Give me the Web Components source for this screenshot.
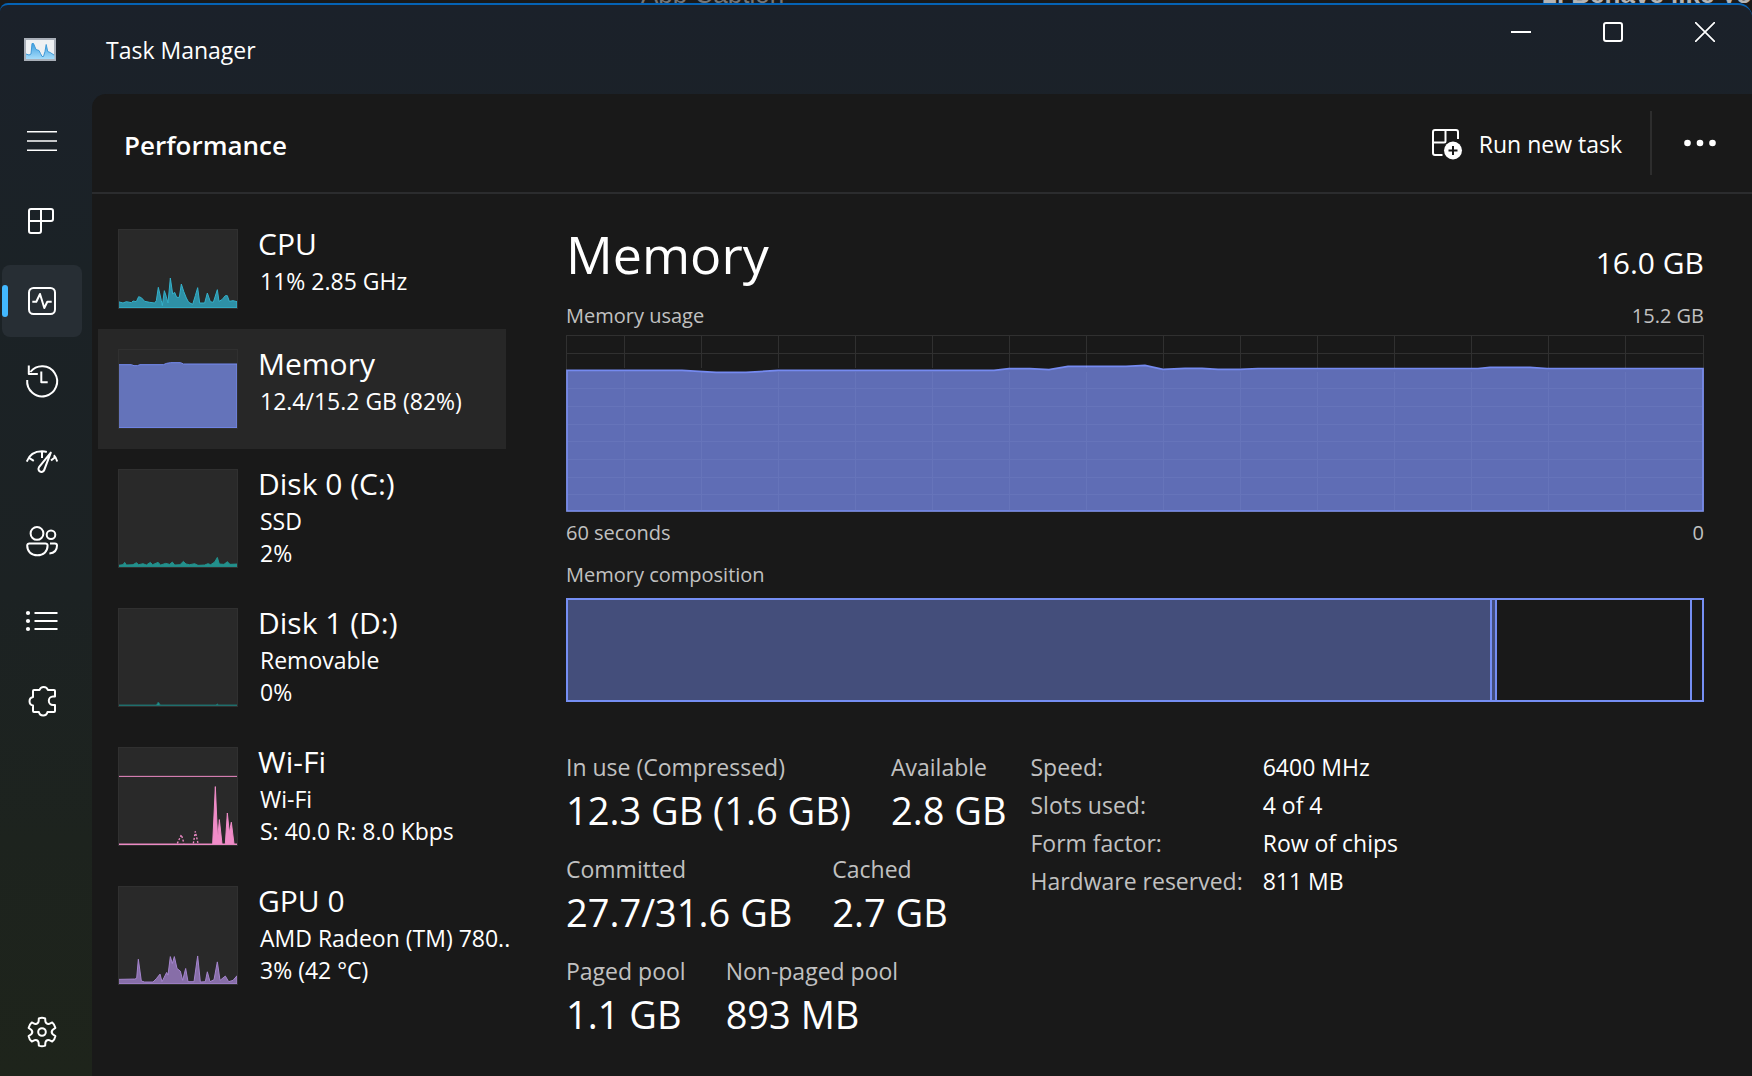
<!DOCTYPE html>
<html lang="en">
<head>
<meta charset="utf-8">
<title>Task Manager</title>
<style>
  html, body { height: 100%; margin: 0; background: #191919; }
  body { font-family: "Open Sans", "Noto Sans", sans-serif; color: #fff; overflow: hidden; }
</style>
</head>
<body>
<tm-app></tm-app>

<script>
const define = (name, html, setup) => {
  const template = document.createElement('template');
  template.innerHTML = html;
  customElements.define(name, class extends HTMLElement {
    connectedCallback() {
      if (this.shadowRoot) return;
      const content = template.content.cloneNode(true);
      if (setup) setup(this, content);
      this.attachShadow({ mode: 'open' }).append(content);
    }
  });
};

const gearPath = () => {
  const at = (deg, r) => {
    const a = deg * Math.PI / 180;
    return (16 + r * Math.sin(a)).toFixed(2) + ' ' + (16 - r * Math.cos(a)).toFixed(2);
  };
  let d = '';
  for (let k = 0; k < 6; k++) {
    const a = k * 60;
    d += (k ? 'L' : 'M') + at(a - 13, 14) + 'Q' + at(a, 14.8) + ' ' + at(a + 13, 14)
       + 'L' + at(a + 18, 11) + 'Q' + at(a + 30, 8.6) + ' ' + at(a + 42, 11);
  }
  return '<path d="' + d + 'Z"/><circle cx="16" cy="16" r="3.8"/>';
};

const icons = {
  menu: '<path d="M1 6.7h30M1 16h30M1 25.3h30" stroke-width="1.6"/>',
  processes: '<path d="M3 6a2 2 0 0 1 2-2h20a2 2 0 0 1 2 2v8a2 2 0 0 1-2 2H15v10a2 2 0 0 1-2 2H5a2 2 0 0 1-2-2zM15 4v12M3 16h12"/>',
  performance: '<rect x="3" y="3" width="26" height="26" rx="4.5"/><path d="M6.3 16.7h4L14 9l4.3 14 3-6.3h4.4"/>',
  history: '<path d="M1.2 15A15 15 0 1 0 4.4 7M2.8.5v8.6h9M15.3 6.5v10.8h6.4"/>',
  startup: '<path d="M.8 16.6C3.4 9.4 9.6 6.3 16 6.3c1.8 0 3.2.2 4.8.7M27.8 10.3c1.6 1.6 2.7 3.6 3.4 6.3M2.6 12.6l5.2 3.2M16 6.5V13M30 11.4l-5 4.2"/><path d="M24.8 7.6 13 22.2a3 3 0 0 0 .8 4.2 3 3 0 0 0 4.4-1.4z"/>',
  users: '<circle cx="11" cy="8.4" r="6.4"/><circle cx="25" cy="9.8" r="4.3"/><path d="M1.2 20.6a2.2 2.2 0 0 1 2.2-2.2h16a2.2 2.2 0 0 1 2.2 2.2c0 6-4.2 9.6-10.2 9.6S1.2 26.6 1.2 20.6zM24 18.4h4.8a2.2 2.2 0 0 1 2.2 2.2c0 5-2.6 7.6-7.6 8"/>',
  details: '<path d="M8.5 8h23M8.5 16h23M8.5 24h23"/><g fill="#fff" stroke="none"><circle cx="2" cy="8" r="2.1"/><circle cx="2" cy="16" r="2.1"/><circle cx="2" cy="24" r="2.1"/></g>',
  services: '<path d="M8 5h5.5a4.4 4.4 0 0 1 8.4 0H28a1 1 0 0 1 1 1v5.500h-2a4.200 4.200 0 0 0 0 8.400h2V26a1 1 0 0 1-1 1h-6.500a4.400 4.400 0 0 1-8.600 0H8a1 1 0 0 1-1-1v-5.500a4.400 4.400 0 0 1 0-8.600V6a1 1 0 0 1 1-1z"/>',
  settings: gearPath()
};

define('tm-icon', `
  <style>
    :host { display: block; width: 32px; height: 32px; }
    svg { display: block; overflow: visible; fill: none; stroke: #fff; stroke-width: 2; stroke-linejoin: round; stroke-linecap: butt; }
  </style>
  <svg width="32" height="32" viewBox="0 0 32 32" aria-hidden="true"></svg>`,
  (host, root) => { root.querySelector('svg').innerHTML = icons[host.getAttribute('name')]; });

define('tm-nav-item', `
  <style>
    :host { display: block; }
    button { width: 80px; height: 72px; padding: 0; border: 0; border-radius: 8px; background: none; display: grid; place-items: center; position: relative; }
    :host([current]) button { background: #272e34; }
    :host([current]) button::before { content: ""; position: absolute; left: 0; top: 20px; width: 6px; height: 32px; border-radius: 3px; background: #42b8ff; }
  </style>
  <button type="button"><tm-icon></tm-icon></button>`,
  (host, root) => {
    root.querySelector('tm-icon').setAttribute('name', host.getAttribute('icon'));
    root.querySelector('button').setAttribute('aria-label', host.getAttribute('label'));
  });

define('tm-nav', `
  <style>
    :host { display: block; }
    nav { height: 100%; box-sizing: border-box; padding: 11px 0 8px 2px; display: flex; flex-direction: column; gap: 8px; }
    .end { margin-top: auto; }
  </style>
  <nav aria-label="Pages">
    <tm-nav-item icon="menu" label="Open navigation"></tm-nav-item>
    <tm-nav-item icon="processes" label="Processes"></tm-nav-item>
    <tm-nav-item icon="performance" label="Performance" current></tm-nav-item>
    <tm-nav-item icon="history" label="App history"></tm-nav-item>
    <tm-nav-item icon="startup" label="Startup apps"></tm-nav-item>
    <tm-nav-item icon="users" label="Users"></tm-nav-item>
    <tm-nav-item icon="details" label="Details"></tm-nav-item>
    <tm-nav-item icon="services" label="Services"></tm-nav-item>
    <tm-nav-item class="end" icon="settings" label="Settings"></tm-nav-item>
  </nav>`);

define('tm-titlebar', `
  <style>
    :host { display: flex; align-items: center; height: 89px; padding: 0 1px 0 24px; }
    .name { margin-left: 50px; font-size: 23px; line-height: 32px; flex: 1; }
    .controls { align-self: flex-start; display: flex; }
    button { width: 92px; height: 54px; padding: 0; border: 0; background: none; display: grid; place-items: center; }
    svg { display: block; fill: none; stroke: #fff; stroke-width: 2; }
  </style>
  <svg width="32" height="23" viewBox="0 0 32 23" aria-hidden="true">
    <defs><linearGradient id="g" x1="0" y1="0" x2="0" y2="1"><stop offset="0" stop-color="#3f9fe0"/><stop offset="1" stop-color="#a5dcfa"/></linearGradient></defs>
    <rect x="1" y="1" width="30" height="21" fill="#eef0f2" stroke="#a9afb8"/>
    <path d="M2 21v-5l3 1 2-1 1-10 1.5-.5 2.5 6 3 1 1.5 3 1.5 3h1.5l1.5-5 1.2-7 1.5 7 2.5 1 4.3 3V21z" fill="url(#g)" stroke="none"/>
    <path d="M2 16l3 1 2-1 1-10.5h1.5l2.5 6 3 1 1.5 3 1.5 3h1.5l1.5-5 1.2-7 1.5 7 2.5 1 3.8 2.500" stroke="#3f9ad8" stroke-width="1"/>
  </svg>
  <span class="name">Task Manager</span>
  <div class="controls">
    <button type="button" aria-label="Minimize"><svg width="20" height="20"><path d="M0 10h20"/></svg></button>
    <button type="button" aria-label="Maximize"><svg width="20" height="20"><rect x="1" y="1" width="18" height="18" rx="2"/></svg></button>
    <button type="button" aria-label="Close"><svg width="20" height="20"><path d="M0 0l20 20M20 0L0 20" stroke-width="1.7"/></svg></button>
  </div>`);

define('tm-header', `
  <style>
    :host { display: flex; align-items: center; height: 98px; border-bottom: 2px solid #2b2c2e; padding-left: 32px; }
    h1 { margin: 0; padding-top: 4px; flex: 1; font-size: 26px; line-height: 36px; font-weight: 600; }
    button { border: 0; background: none; padding: 0; color: inherit; font: inherit; }
    .run { display: flex; align-items: center; gap: 16px; padding: 18px 28px 16px 16px; font-size: 23px; line-height: 32px; }
    .sep { width: 2px; height: 64px; background: #2d2d2d; }
    .more { width: 100px; height: 64px; padding-right: 4px; display: grid; place-items: center; }
    svg { display: block; }
  </style>
  <h1>Performance</h1>
  <button type="button" class="run">
    <svg width="31" height="31" viewBox="0 0 31 31" fill="none" stroke="#fff" stroke-width="2" aria-hidden="true">
      <path d="M10.5 26H3a2 2 0 0 1-2-2V3a2 2 0 0 1 2-2h21a2 2 0 0 1 2 2v7M13.5 1v11a1.5 1.5 0 0 1-1.5 1.5H1"/>
      <circle cx="21" cy="21.5" r="9" fill="#fff" stroke="none"/>
      <path d="M21 17v9M16.5 21.5h9" stroke="#191919"/>
    </svg>
    <span>Run new task</span>
  </button>
  <div class="sep"></div>
  <button type="button" class="more" aria-label="More options">
    <svg width="32" height="8" fill="#fff"><circle cx="3.5" cy="4" r="3.3"/><circle cx="16" cy="4" r="3.3"/><circle cx="28.5" cy="4" r="3.3"/></svg>
  </button>`);

const sparks = {
  cpu: { h: 240, fill: '#2e90a6', stroke: '#33b1cb',
    line: '0,218 15,222 25,218 40,221 45,216 55,218 62,203 70,206 80,217 95,220 110,222 115,215 121,175 130,215 133,230 139,185 145,203 150,222 157,147 164,195 170,190 176,205 184,205 190,165 197,187 205,207 212,220 224,226 232,200 239,176 245,222 260,222 268,192 277,218 286,220 298,182 303,217 312,212 322,200 328,200 334,217 345,215 357,218' },
  memory: { h: 240, fill: '#6473ba', stroke: '#758af0',
    line: '1,47 40,47 48,50 58,50 66,47 136,47 146,43 158,41 188,41 196,45 357,45' },
  disk0: { h: 300, fill: '#22908c', stroke: '#22908c',
    line: '0,292 15,290 20,283 25,291 45,290 55,284 62,290 75,287 85,291 97,283 104,290 120,283 128,291 143,286 155,289 163,282 170,291 186,290 196,280 204,288 215,290 230,287 240,292 260,291 270,287 278,290 290,282 298,268 304,288 318,289 328,281 336,289 357,288' },
  disk1: { h: 300, fill: '#22908c', stroke: '#1f6e6c',
    line: '0,294 115,294 121,285 127,294 294,294 298,291 302,294 357,294' },
  wifi: { h: 300, fill: '#f08cc8', stroke: '#f08cc8', rule: 89,
    line: '0,294 284,294 292,120 299,280 304,220 312,294 322,294 328,200 334,260 340,228 348,294 357,294',
    dots: '178,292 190,266 198,292 M226,292 232,256 240,292' },
  gpu: { h: 300, fill: '#876ea8', stroke: '#a585cf',
    line: '0,283 50,282 56,280 61,222 70,288 80,291 105,291 115,281 126,267 132,290 146,262 150,270 157,214 163,235 169,214 177,250 187,258 194,286 203,250 210,290 228,290 239,212 247,291 262,290 268,260 276,290 288,284 298,230 306,286 322,273 332,290 345,286 357,272' }
};

define('tm-spark', `
  <style>
    :host { display: block; width: 120px; background: #292929; outline: 1px solid #303030; outline-offset: -1px; }
    :host { height: 99px; }
    :host([kind="cpu"]), :host([kind="memory"]) { height: 80px; }
    svg { display: block; width: 100%; height: 100%; }
  </style>
  <svg preserveAspectRatio="none" aria-hidden="true"></svg>`,
  (host, root) => {
    const s = sparks[host.getAttribute('kind')];
    const svg = root.querySelector('svg');
    svg.setAttribute('viewBox', '0 0 360 ' + s.h);
    const base = s.h - 4;
    svg.innerHTML =
      `<path d="M${s.line} L357,${base} 1,${base}Z" fill="${s.fill}" stroke="${s.stroke}" stroke-width="3"/>`
      + (s.rule ? `<path d="M3,${s.rule}H357" stroke="${s.stroke}" stroke-width="3"/>` : '')
      + (s.dots ? `<path d="M${s.dots}" fill="none" stroke="${s.stroke}" stroke-width="4" stroke-dasharray="6 5"/>` : '');
  });

define('tm-resource', `
  <style>
    :host { display: block; }
    button { display: flex; align-items: flex-start; gap: 20px; width: 408px; padding: 0 20px; border: 0; background: none; color: inherit; font: inherit; text-align: left; }
    :host([selected]) button { background: #272727; }
    tm-spark { flex: none; margin: 20px 0; }
    .text { display: block; padding-top: 14px; white-space: nowrap; }
    .title { display: block; font-size: 30px; line-height: 42px; }
    ::slotted(span) { display: block; padding-left: 2px; font-size: 23px; line-height: 32px; }
  </style>
  <button type="button">
    <tm-spark></tm-spark>
    <span class="text"><span class="title"></span><slot></slot></span>
  </button>`,
  (host, root) => {
    root.querySelector('tm-spark').setAttribute('kind', host.getAttribute('kind'));
    root.querySelector('.title').textContent = host.getAttribute('title-text');
  });

define('tm-usage-chart', `
  <style>
    :host { display: block; height: 177px; }
    svg { display: block; width: 100%; height: 100%; }
    path { vector-effect: non-scaling-stroke; }
  </style>
  <svg viewBox="0 0 1138 177" preserveAspectRatio="none" role="img" aria-label="Memory usage over 60 seconds">
    <path d="M1 35.4H116L150 37.4H180L212 35.4H428L443 33.700H464L483 34.700 502 31.400H560L579 30.400 597 34.400 619 33.400H636L652 34.400H674L692 33.500H912L924 32.300H964L981 33.500H1137V176H1Z" fill="#5f6db5" stroke="#758af0" stroke-width="1.700"/>
    <path id="grid" fill="none" stroke="#fff" stroke-opacity=".1" stroke-width="1" shape-rendering="crispEdges"/>
    <path id="inner" fill="none" stroke="#7886c8" stroke-opacity=".3" stroke-width="1" shape-rendering="crispEdges"/>
  </svg>`,
  (host, root) => {
    let grid = 'M.5.5H1137.5V176.5H.5ZM0 18.5H1137', inner = '';
    for (let x = 58.5; x < 1130; x += 77) {
      grid += `M${x} 0V33`;
      inner += `M${x} 37V176`;
    }
    for (let i = 3; i < 10; i++) inner += `M2 ${Math.round(i * 17.7) + .5}H1136`;
    root.getElementById('grid').setAttribute('d', grid);
    root.getElementById('inner').setAttribute('d', inner);
  });

define('tm-composition', `
  <style>
    :host { display: flex; height: 100px; border: 2px solid #758ef3; }
    div { border-right: 2px solid #758ef3; box-sizing: border-box; }
    .used { flex: 926; background: #444e7b; }
    .modified { flex: none; width: 5px; background: #444e7b; }
    .standby { flex: 194; }
    .free { flex: 10; border: 0; }
  </style>
  <div class="used"></div><div class="modified"></div><div class="standby"></div><div class="free"></div>`);

define('tm-stat', `
  <style>
    :host { display: block; white-space: nowrap; }
    .label { font-size: 23px; line-height: 34px; color: #c1c1c1; }
    .value { font-size: 38px; line-height: 52px; }
  </style>
  <div class="label"></div><div class="value"><slot></slot></div>`,
  (host, root) => { root.querySelector('.label').textContent = host.getAttribute('label'); });

define('tm-memory', `
  <style>
    :host { display: block; padding: 28px 48px 0 0; min-width: 0; }
    .row { display: flex; justify-content: space-between; align-items: baseline; }
    h2 { margin: 0; font-weight: 400; font-size: 52px; line-height: 64px; }
    .total { font-size: 30px; }
    .small { font-size: 20px; line-height: 28px; color: #c1c1c1; }
    .gap { margin-top: 14px; }
    .usage { margin-top: 16px; }
    tm-usage-chart { margin: 5px 0 7px; }
    tm-composition { margin-top: 9px; }
    .details { display: flex; align-items: flex-start; gap: 24px; margin-top: 46px; }
    .stats { display: flex; flex-direction: column; gap: 16px; padding-top: 2px; }
    .line { display: flex; gap: 40px; }
    table { border-spacing: 0; font-size: 23px; line-height: 38px; white-space: nowrap; }
    th { padding: 0 20px 0 0; font-weight: 400; text-align: left; color: #c1c1c1; }
    td { padding: 0; }
  </style>
  <div class="row"><h2>Memory</h2><span class="total">16.0 GB</span></div>
  <div class="row small usage"><span>Memory usage</span><span>15.2 GB</span></div>
  <tm-usage-chart></tm-usage-chart>
  <div class="row small"><span>60 seconds</span><span>0</span></div>
  <div class="small gap">Memory composition</div>
  <tm-composition></tm-composition>
  <div class="details">
    <div class="stats">
      <div class="line"><tm-stat label="In use (Compressed)">12.3 GB (1.6 GB)</tm-stat><tm-stat label="Available">2.8 GB</tm-stat></div>
      <div class="line"><tm-stat label="Committed">27.7/31.6 GB</tm-stat><tm-stat label="Cached">2.7 GB</tm-stat></div>
      <div class="line"><tm-stat label="Paged pool">1.1 GB</tm-stat><tm-stat label="Non-paged pool">893 MB</tm-stat></div>
    </div>
    <table>
      <tr><th scope="row">Speed:</th><td>6400 MHz</td></tr>
      <tr><th scope="row">Slots used:</th><td>4 of 4</td></tr>
      <tr><th scope="row">Form factor:</th><td>Row of chips</td></tr>
      <tr><th scope="row">Hardware reserved:</th><td>811 MB</td></tr>
    </table>
  </div>`);

define('tm-behind', `
  <style>
    :host { display: flex; align-items: flex-end; justify-content: space-between; height: 3px; overflow: hidden; background: #191919; padding-left: 641px; font-family: "Liberation Sans", sans-serif; font-size: 26px; line-height: 18px; white-space: nowrap; }
    .a { color: #777; }
    .b { color: #b4b4b4; font-weight: 700; }
  </style>
  <span class="a">App Caption</span><span class="b">2. Behave like yo</span>`);

define('tm-app', `
  <style>
    :host { display: flex; flex-direction: column; height: 100vh; }
    .window { flex: 1; min-height: 0; display: flex; flex-direction: column; border-top: 2px solid #0563b5; border-radius: 8px 14px 0 0; overflow: hidden;
      background: linear-gradient(180deg, #1b212a 0, #1b2226 25%, #1c2223 55%, #1d231e 78%, #1e241b 100%); }
    .body { flex: 1; min-height: 0; display: flex; }
    tm-nav { flex: none; width: 92px; }
    main { flex: 1; min-width: 0; display: flex; flex-direction: column; background: #191919; border-top-left-radius: 14px; }
    .content { flex: 1; min-height: 0; display: flex; }
    .list { flex: none; width: 468px; padding: 15px 0 0 6px; }
    tm-memory { flex: 1; }
  </style>
  <tm-behind></tm-behind>
  <div class="window">
    <tm-titlebar></tm-titlebar>
    <div class="body">
      <tm-nav></tm-nav>
      <main>
        <tm-header></tm-header>
        <div class="content">
          <div class="list">
            <tm-resource kind="cpu" title-text="CPU"><span>11% 2.85 GHz</span></tm-resource>
            <tm-resource kind="memory" title-text="Memory" selected><span>12.4/15.2 GB (82%)</span></tm-resource>
            <tm-resource kind="disk0" title-text="Disk 0 (C:)"><span>SSD</span><span>2%</span></tm-resource>
            <tm-resource kind="disk1" title-text="Disk 1 (D:)"><span>Removable</span><span>0%</span></tm-resource>
            <tm-resource kind="wifi" title-text="Wi-Fi"><span>Wi-Fi</span><span>S: 40.0 R: 8.0 Kbps</span></tm-resource>
            <tm-resource kind="gpu" title-text="GPU 0"><span>AMD Radeon (TM) 780..</span><span>3% (42 °C)</span></tm-resource>
          </div>
          <tm-memory></tm-memory>
        </div>
      </main>
    </div>
  </div>`);
</script>
</body>
</html>
